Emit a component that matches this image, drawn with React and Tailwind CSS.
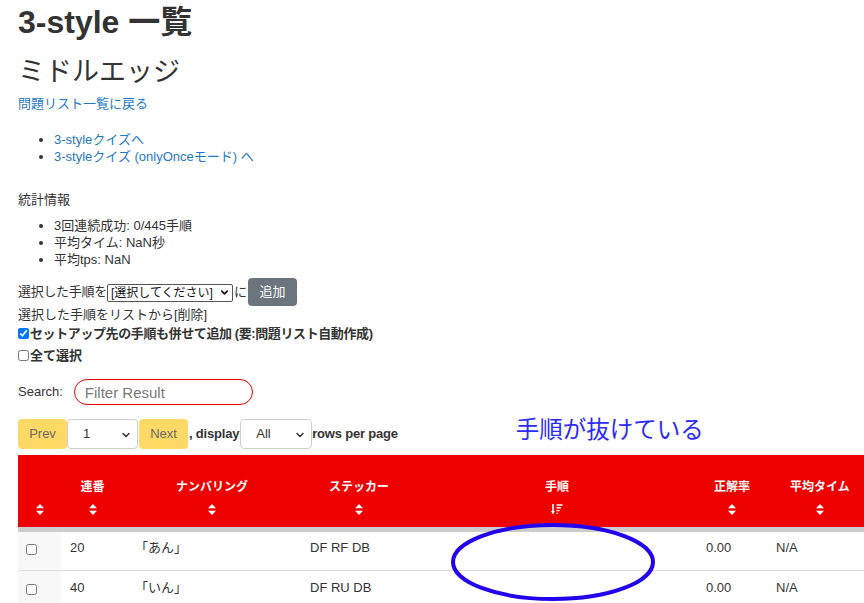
import React from "react";
import { ChevronDown } from "lucide-react";

const font = { fontFamily: '"Liberation Sans", "Noto Sans CJK JP", sans-serif' };

function SortIcon() {
  return (
    <svg width="8" height="11" viewBox="0 0 8 11" className="inline-block">
      <path d="M4 0 L8 4.3 L0 4.3 Z" fill="white" />
      <path d="M0 6.7 L8 6.7 L4 11 Z" fill="white" />
    </svg>
  );
}

function SortDownIcon() {
  return (
    <svg width="12" height="11" viewBox="0 0 12 11" className="inline-block">
      <path d="M2 0 V9" stroke="white" strokeWidth="1.6" />
      <path d="M0 7 L2 10.5 L4 7 Z" fill="white" />
      <path d="M5.5 1 H11.5 M5.5 3.8 H10 M5.5 6.6 H8.5 M5.5 9.4 H7" stroke="white" strokeWidth="1.4" />
    </svg>
  );
}

function PageSelect({ value, width }) {
  return (
    <div className={`relative ${width} h-[30px]`}>
      <select
        defaultValue={value}
        className="h-full w-full appearance-none rounded-[4px] border border-[#cfcfcf] bg-white pl-[15px] text-[13px] text-[#333]"
      >
        <option>{value}</option>
      </select>
      <ChevronDown className="pointer-events-none absolute right-[6px] top-[10px] h-3 w-3 text-[#333]" strokeWidth={3} />
    </div>
  );
}

const columns = [
  { label: "", w: "w-[43px]" },
  { label: "連番", w: "w-[63px]" },
  { label: "ナンバリング", w: "w-[176px]" },
  { label: "ステッカー", w: "w-[118px]" },
  { label: "手順", w: "w-[278px]", sorted: true },
  { label: "正解率", w: "w-[72px]" },
  { label: "平均タイム", w: "w-[104px]" },
  { label: "", w: "w-[100px]" },
];

const rows = [
  { no: 20, num: "「あん」", sticker: "DF RF DB", rate: "0.00", time: "N/A" },
  { no: 40, num: "「いん」", sticker: "DF RU DB", rate: "0.00", time: "N/A" },
];

export default function App() {
  return (
    <div className="relative w-[864px] h-[603px] overflow-hidden bg-white text-[#333]" style={font}>
      <div className="pl-[18px]">
        <h1 className="mt-[3px] text-[32px] font-bold leading-[38px]">3-style 一覧</h1>
        <h2 className="mt-[14px] text-[27px] leading-[34px]">ミドルエッジ</h2>
        <a href="#" className="mt-[6px] block text-[13px] leading-[17px] text-[#1e78c8]">
          問題リスト一覧に戻る
        </a>
        <ul className="mt-[19px] list-disc pl-[36px] text-[13px] leading-[17px] text-[#1e78c8]">
          <li className="marker:text-[#333]"><a href="#">3-styleクイズへ</a></li>
          <li className="marker:text-[#333]"><a href="#">3-styleクイズ (onlyOnceモード) へ</a></li>
        </ul>
        <p className="mt-[26px] text-[13px] leading-[17px]">統計情報</p>
        <ul className="mt-[9px] list-disc pl-[36px] text-[13px] leading-[17px]">
          <li>3回連続成功: 0/445手順</li>
          <li>平均タイム: NaN秒</li>
          <li>平均tps: NaN</li>
        </ul>
        <div className="mt-[10px] flex h-[28px] items-center text-[13px]">
          <span className="tracking-[-0.3px]">選択した手順を</span>
          <div className="relative h-[18px] w-[126px]">
            <select className="h-full w-full appearance-none rounded-[2px] border border-[#555] bg-white pl-[3px] text-[12px] leading-[16px] text-[#111]">
              <option>[選択してください]</option>
            </select>
            <ChevronDown className="pointer-events-none absolute right-[3px] top-[4px] h-[11px] w-[11px] text-[#111]" strokeWidth={3.5} />
          </div>
          <span className="ml-px">に</span>
          <button className="ml-px h-[28px] w-[49px] rounded-[4px] bg-[#6c757d] text-[13px] text-white">追加</button>
        </div>
        <p className="text-[13px] leading-[17px]">選択した手順をリストから[削除]</p>
        <label className="mt-[2px] flex items-center text-[13px] font-bold leading-[17px] tracking-[-0.4px]">
          <input type="checkbox" defaultChecked className="m-0 mr-[1px] h-[11px] w-[11px] accent-[#0075ff]" />
          セットアップ先の手順も併せて追加 (要:問題リスト自動作成)
        </label>
        <label className="mt-[5px] flex items-center text-[13px] font-bold leading-[17px]">
          <input type="checkbox" className="m-0 mr-[1px] h-[11px] w-[11px]" />
          全て選択
        </label>
        <div className="mt-[15px] flex h-[26px] items-center text-[13px]">
          <span>Search:</span>
          <input
            placeholder="Filter Result"
            className="ml-[11px] h-[26px] w-[179px] rounded-full border border-[#e60000] px-[10px] text-[15px] placeholder:text-[#777] outline-none"
          />
        </div>
        <div className="mt-[14px] flex h-[30px] items-center text-[13px]">
          <button className="h-[30px] w-[49px] rounded-[4px] bg-[#ffd966] text-[#6b6b6b]">Prev</button>
          <PageSelect value="1" width="w-[71px]" />
          <button className="ml-px h-[30px] w-[49px] rounded-[4px] bg-[#ffd966] text-[#6b6b6b]">Next</button>
          <span className="ml-px font-bold tracking-[-0.2px]">, display</span>
          <PageSelect value="All" width="ml-px w-[72px]" />
          <span className="font-bold tracking-[-0.2px]">rows per page</span>
          <span className="ml-[118px] -mt-[6px] text-[23.5px] text-[#2b2bff]">手順が抜けている</span>
        </div>
        <table className="mt-[6px] w-[954px] table-fixed border-collapse">
          <colgroup>
            {columns.map((c, i) => (
              <col key={i} className={c.w} />
            ))}
          </colgroup>
          <thead>
            <tr className="h-[74px] border-b-[5px] border-[#cccccc] bg-[#ee0000]">
              {columns.map((c, i) => (
                <th key={i} className="px-[4px] pt-[24px] pb-[10px] align-top text-[12px] font-bold text-white">
                  <div className="h-[16px] leading-[16px]">{c.label}</div>
                  <div className="mt-[9px] flex h-[11px] justify-center">
                    {c.sorted ? <SortDownIcon /> : <SortIcon />}
                  </div>
                </th>
              ))}
            </tr>
          </thead>
          <tbody className="text-[13px]">
            {rows.map((r) => (
              <tr key={r.no} className="h-[41px] border-b border-[#dddddd]">
                <td className="bg-[#f8f8f8] pl-[8px] pb-[3px]">
                  <input type="checkbox" className="m-0 block h-[11px] w-[11px]" />
                </td>
                <td className="px-[9px] pb-[5px]">{r.no}</td>
                <td className="px-[11px] pb-[5px]">{r.num}</td>
                <td className="px-[10px] pb-[5px]">{r.sticker}</td>
                <td className="px-[10px]"></td>
                <td className="px-[10px] pb-[5px]">{r.rate}</td>
                <td className="px-[8px] pb-[5px]">{r.time}</td>
                <td className="px-[8px]"></td>
              </tr>
            ))}
          </tbody>
        </table>
      </div>
      <svg className="pointer-events-none absolute left-0 top-0" width="864" height="603">
        <ellipse cx="553" cy="562" rx="100" ry="37" fill="none" stroke="#2200ee" strokeWidth="4" />
      </svg>
    </div>
  );
}
